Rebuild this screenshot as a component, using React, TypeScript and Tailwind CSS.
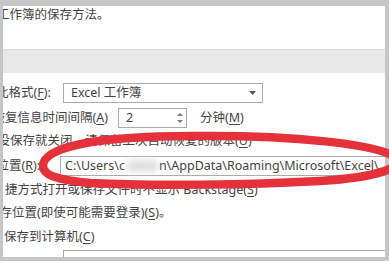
import React from "react";

const U = ({ c }: { c: string }) => (
  <span className="underline underline-offset-[2px] decoration-[1px]">{c}</span>
);

export default function App() {
  return (
    <div
      className="relative w-[389px] h-[261px] overflow-hidden bg-[#c6c6c6] pt-[6px] pl-[3px] pr-[4px] pb-[4px] text-[12.5px] text-[#444444]"
      style={{ fontFamily: '"Noto Sans", "Noto Sans CJK SC", sans-serif' }}
    >
      <div className="h-full bg-white flex flex-col overflow-hidden">
        <div className="h-[43px] shrink-0 leading-[18px] whitespace-nowrap">
          <span className="ml-[-6px]">工作簿的保存方法。</span>
        </div>
        <div className="h-[24px] shrink-0 bg-[#e8e8e8] border-t border-[#dedede]" />

        <div className="mt-[10px] h-[20px] shrink-0 flex items-center whitespace-nowrap">
          <div className="w-[60px] shrink-0 ml-[-7px] pl-0">
            此格式(<U c="F" />):
          </div>
          <div className="ml-[7px] w-[200px] h-[20px] border border-[#ababab] flex items-center justify-between pl-[7px] pr-[6px]">
            <span>Excel 工作簿</span>
            <svg width="7" height="4" viewBox="0 0 7 4">
              <path d="M0 0 L7 0 L3.5 4 Z" fill="#5a5a5a" />
            </svg>
          </div>
        </div>

        <div className="mt-[5px] h-[20px] shrink-0 flex items-center whitespace-nowrap">
          <div className="w-[125.5px] shrink-0 ml-[-10.5px]">
            恢复信息时间间隔(<U c="A" />)
          </div>
          <div className="w-[69px] h-[20px] border border-[#ababab] flex items-center justify-between pl-[7px] pr-[3px]">
            <span>2</span>
            <div className="flex flex-col gap-[4px]">
              <svg width="6" height="3" viewBox="0 0 6 3">
                <path d="M0 3 L6 3 L3 0 Z" fill="#7a7a7a" />
              </svg>
              <svg width="6" height="3" viewBox="0 0 6 3">
                <path d="M0 0 L6 0 L3 3 Z" fill="#7a7a7a" />
              </svg>
            </div>
          </div>
          <span className="ml-[13px]">
            分钟(<U c="M" />)
          </span>
        </div>

        <div className="h-[26px] shrink-0 flex items-center whitespace-nowrap">
          <span className="ml-[-5.5px]">
            没保存就关闭，请保留上次自动恢复的版本(<U c="U" />)
          </span>
        </div>

        <div className="mt-[2px] h-[20px] shrink-0 flex items-center whitespace-nowrap">
          <div className="w-[63.5px] shrink-0 ml-[-6.5px]">
            位置(<U c="R" />):
          </div>
          <div className="w-[400px] shrink-0 h-[20px] border border-[#ababab] flex items-center pl-[4px]">
            <span>C:\Users\c</span>
            <span className="inline-block w-[32px] h-[12px] mx-[1px] rounded-full bg-[#dedede] blur-[3px]" />
            <span>n\AppData\Roaming\Microsoft\Excel\</span>
          </div>
        </div>

        <div className="mt-[2px] h-[24px] shrink-0 flex items-center whitespace-nowrap">
          <span className="ml-[2px]">
            捷方式打开或保存文件时不显示 Backstage(<U c="S" />)
          </span>
        </div>

        <div className="h-[23px] shrink-0 flex items-center whitespace-nowrap">
          <span className="ml-[-3.5px]">
            存位置(即使可能需要登录)(<U c="S" />)。
          </span>
        </div>

        <div className="h-[24px] shrink-0 flex items-center whitespace-nowrap">
          <span className="ml-[1px]">
            保存到计算机(<U c="C" />)
          </span>
        </div>

        <div className="mt-[1px] ml-[60px] w-[400px] h-[20px] shrink-0 border-t border-l border-[#a8a8a8]" />
      </div>

      <svg
        className="absolute left-0 top-0 pointer-events-none"
        width="389"
        height="261"
        viewBox="0 0 389 261"
      >
        <path
          d="M43 166 C43 148 90 136 195 136 C290 135 380 144 396 158 C404 167 380 177 320 181 C250 185 150 186 90 183 C58 180 43 175 43 166 Z"
          fill="none"
          stroke="#e5323a"
          strokeWidth="8.5"
        />
      </svg>
    </div>
  );
}
